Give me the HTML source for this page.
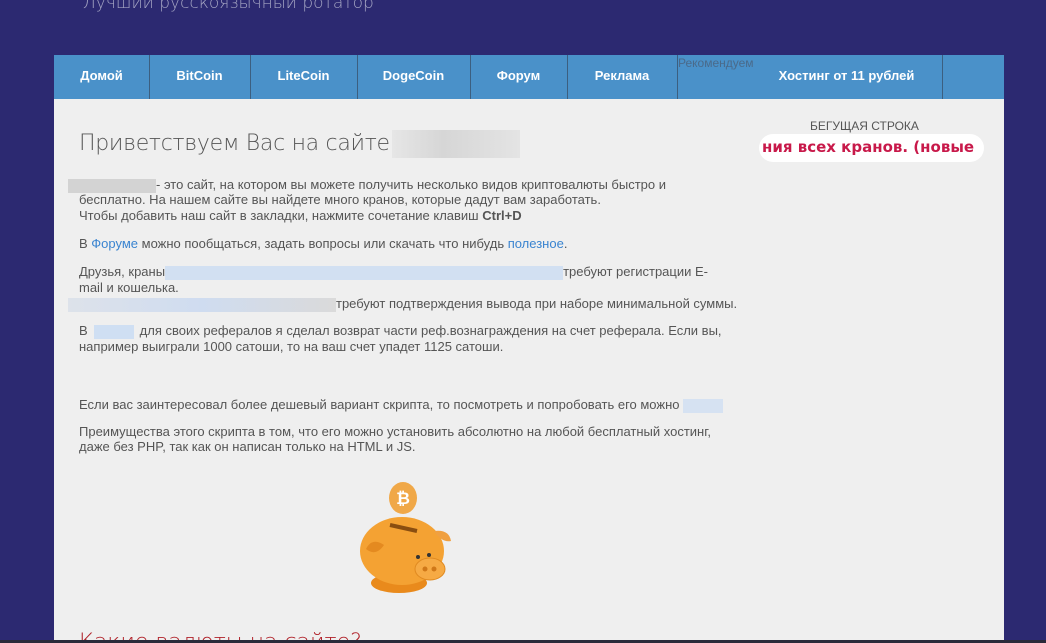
<!DOCTYPE html>
<html><head><meta charset="utf-8"><style>
*{margin:0;padding:0;box-sizing:border-box}
html,body{width:1046px;height:643px;overflow:hidden}
body{background:#2c2971;font-family:"Liberation Sans","DejaVu Sans",sans-serif;position:relative}
.t{position:absolute;white-space:nowrap}
#sub{left:83px;top:-7px;color:#a3a3c2;font-size:17px;font-family:"DejaVu Sans",sans-serif;font-weight:300}
#nav{position:absolute;left:54px;top:55px;width:950px;height:44px;background:#4a91c9}
.sep{position:absolute;top:0;width:1px;height:44px;background:#3c5f80}
.ni{position:absolute;top:13px;color:#fff;font-size:13px;font-weight:bold;text-align:center}
#main{position:absolute;left:54px;top:99px;width:950px;height:541px;background:#efefef;overflow:hidden}
.p{position:absolute;left:25px;font-size:13px;color:#555;line-height:16px;white-space:nowrap}
.bl{display:inline-block;height:14px;vertical-align:middle}
a{color:#3a84d0}
#bottom{position:absolute;left:0;top:640px;width:1046px;height:3px;background:#2a2a3a}
</style></head><body>
<div class="t" id="sub">Лучший русскоязычный ротатор</div>
<div id="nav">
<div class="sep" style="left:95px"></div><div class="sep" style="left:196px"></div><div class="sep" style="left:303px"></div><div class="sep" style="left:416px"></div><div class="sep" style="left:513px"></div><div class="sep" style="left:623px"></div><div class="sep" style="left:888px"></div>
<div class="ni" style="left:0;width:95px">Домой</div>
<div class="ni" style="left:95px;width:101px">BitCoin</div>
<div class="ni" style="left:196px;width:107px">LiteCoin</div>
<div class="ni" style="left:303px;width:113px">DogeCoin</div>
<div class="ni" style="left:416px;width:97px">Форум</div>
<div class="ni" style="left:513px;width:110px">Реклама</div>
<div class="t" style="left:624px;top:1px;font-size:12px;color:#4a6a8a">Рекомендуем</div>
<div class="ni" style="left:690px;width:205px">Хостинг от 11 рублей</div>
</div>
<div id="main">
<div class="t" style="left:25px;top:31px;font-size:22px;color:#555;font-family:'DejaVu Sans',sans-serif;font-weight:300;letter-spacing:-0.3px">Приветствуем Вас на сайте<span style="display:inline-block;width:128px;height:28px;background:linear-gradient(90deg,#e6e6e6,#d6d6d6 40%,#e4e4e4);vertical-align:middle;margin-left:2px"></span></div>
<div class="p" style="top:78px;left:14px"><span class="bl" style="width:88px;background:#d3d3d3"></span>- это сайт, на котором вы можете получить несколько видов криптовалюты быстро и</div>
<div class="p" style="top:93px">бесплатно. На нашем сайте вы найдете много кранов, которые дадут вам заработать.</div>
<div class="p" style="top:109px">Чтобы добавить наш сайт в закладки, нажмите сочетание клавиш <b>Ctrl+D</b></div>
<div class="p" style="top:137px">В <a>Форуме</a> можно пообщаться, задать вопросы или скачать что нибудь <a>полезное</a>.</div>
<div class="p" style="top:165px">Друзья, краны<span class="bl" style="width:398px;background:#d2e0f2"></span>требуют регистрации E-</div>
<div class="p" style="top:181px">mail и кошелька.</div>
<div class="p" style="top:197px;left:14px"><span class="bl" style="width:268px;background:linear-gradient(90deg,#dde2ea,#cfdcf0 50%,#dadada)"></span>требуют подтверждения вывода при наборе минимальной суммы.</div>
<div class="p" style="top:224px">В<span class="bl" style="width:40px;background:#cfdff3;margin:0 6px"></span>для своих рефералов я сделал возврат части реф.вознаграждения на счет реферала. Если вы,</div>
<div class="p" style="top:240px">например выиграли 1000 сатоши, то на ваш счет упадет 1125 сатоши.</div>
<div class="p" style="top:298px">Если вас заинтересовал более дешевый вариант скрипта, то посмотреть и попробовать его можно <span class="bl" style="width:40px;background:#d6e2f2"></span></div>
<div class="p" style="top:325px">Преимущества этого скрипта в том, что его можно установить абсолютно на любой бесплатный хостинг,</div>
<div class="p" style="top:340px">даже без PHP, так как он написан только на HTML и JS.</div>
<svg style="position:absolute;left:300px;top:380px" width="110" height="120" viewBox="0 0 110 120">
<ellipse cx="49" cy="19" rx="14" ry="16" fill="#f0a848"/><text x="49" y="25" font-size="17" font-weight="bold" fill="#fff" text-anchor="middle" font-family="Liberation Sans">₿</text>
<ellipse cx="45" cy="104" rx="28" ry="10" fill="#e98a1c"/>
<ellipse cx="48" cy="72" rx="42" ry="34" fill="#f4a233"/>
<path d="M36 46 L63 52" stroke="#8a4e10" stroke-width="4"/>
<path d="M12 70 Q18 58 30 66 Q22 78 12 70Z" fill="#e48a20"/>
<path d="M80 52 Q95 50 97 62 Q88 64 80 52Z" fill="#f0a040"/>
<ellipse cx="76" cy="90" rx="15" ry="11" fill="#f6aa44" stroke="#e08a20"/>
<circle cx="71" cy="90" r="2.5" fill="#d07818"/><circle cx="80" cy="90" r="2.5" fill="#d07818"/>
<circle cx="64" cy="78" r="2" fill="#333"/><circle cx="75" cy="76" r="2" fill="#333"/>
</svg>
<div class="t" style="left:25px;top:531px;font-size:22px;color:#b0222a;font-family:'DejaVu Sans',sans-serif;font-weight:300">Какие валюты на сайте?</div>
<div class="t" style="left:756px;top:20px;font-size:12px;color:#555">БЕГУЩАЯ СТРОКА</div>
<div style="position:absolute;left:705px;top:35px;width:225px;height:28px;background:#fff;border-radius:14px;overflow:hidden"><div class="t" style="left:3px;top:4px;font-size:15px;font-weight:bold;color:#c8194a;font-family:'DejaVu Sans',sans-serif">ния всех кранов. (новые</div></div>
</div>
<div id="bottom"></div>
</body></html>
